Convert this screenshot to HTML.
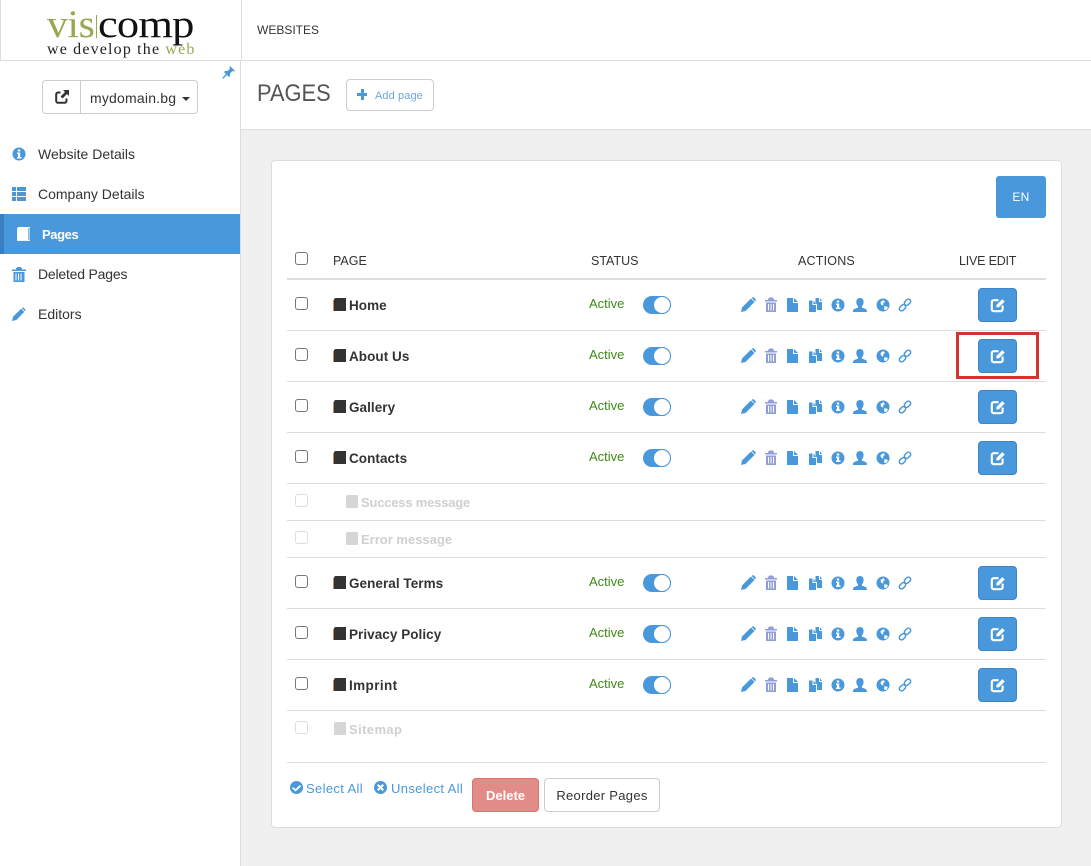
<!DOCTYPE html>
<html lang="en"><head><meta charset="utf-8"><title>Pages</title>
<style>
html,body{margin:0;padding:0;width:1091px;height:866px;overflow:hidden;background:#f0f0f0}
body{position:relative;font-family:"Liberation Sans",sans-serif;color:#333;font-size:13px}
div,span,svg{position:absolute;box-sizing:border-box}
.t{white-space:nowrap;line-height:18px}
.nav{left:38px;font-size:14px;color:#333}
.r{left:0;width:791px;height:50px}
.n{left:77px;top:17px;font-weight:bold;font-size:13.5px;letter-spacing:.05px;color:#333}
.cb{left:23px;top:17px;width:13px;height:13px;border:1px solid #767676;border-radius:3px;background:#fff}
.bk{left:61px;top:18px;width:14px;height:14px}
.ac{left:317px;top:15px;font-size:13px;color:#3c8a16}
.sw{left:371px;top:16px;width:28px;height:18px;border-radius:9px;background:#4a98dc}
.sw:after{content:"";position:absolute;right:0;top:0;width:18px;height:18px;border-radius:50%;background:#fff;border:1px solid #4a98dc;box-sizing:border-box}
.acts{left:469px;top:17px;width:171px;height:16px}
.le{left:706px;top:8px;width:39px;height:34px;background:#4a98dc;border:1px solid #3d86c6;border-radius:4px}
.le svg{left:11px;top:8px;width:16px;height:16px}
.d .cb{border-color:#ddd;top:10px}
.d .n{color:#d0d0d0;top:10px;font-size:13px;letter-spacing:0}
.d .bk{top:11px}
.line{left:15px;width:759px;height:1px;background:#ddd}
.th{top:252px;font-size:12.5px;color:#333}
</style></head>
<body>
<svg width="0" height="0" style="left:0;top:0">
<defs>
<symbol id="book" viewBox="0 0 14 14"><path d="M3 0H13V13H1V2Q1 0 3 0Z" fill="#333"/><path d="M0 2h1v11H0z" fill="#c98a50"/></symbol>
<symbol id="bookg" viewBox="0 0 14 14"><path d="M3 0H13V13H1V2Q1 0 3 0Z" fill="#d6d6d6"/></symbol>
<symbol id="acts" viewBox="0 0 171 16">
<g fill="#4a98dc">
<path d="M0 15 1 10.500 10 1.500 13.500 5 4.500 14ZM11 .5Q12 0 13 .5L14.500 2Q15 3 14.500 4L14 4.500 10.700 1Z"/>
<path transform="translate(8 0)" fill="#8f9fd8" d="M28 3h-3V1.500h-1V.5h-4v1h-1V3h-3v1.500h12ZM17 5.500h10V15H17Zm2 1.500v6.500h1V7Zm2.500 0v6.500h1V7Zm2.500 0v6.500h1V7Z" fill-rule="evenodd"/>
<path d="M46 1h6v5h5V15H46ZM53 1l4 4h-4Z"/>
<path d="M74.500 1h3.500v4h3v8h-5V7.500l-1.500-1.500ZM79 1l2 3h-2ZM68 3.500h3.500V8H75V15H68ZM72.500 3.500 75 7h-2.500Z"/>
<path fill-rule="evenodd" d="M97 1.500a6.500 6.500 0 1 0 0 13 6.500 6.500 0 0 0 0-13ZM95.800 3.500h2.400v2h-2.400ZM95 6.500h3.200v4H99.500v1.500h-4.500v-1.500h1v-2.500h-1Z"/>
<path d="M119 1c2.500 0 3.600 1.800 3.600 4s-1 3.700-1.700 4.300v1.300c2 .8 5 1.200 5 3.400v1H112v-1c0-2.200 3-2.600 5-3.400V9.300c-.7-.6-1.700-2.100-1.700-4.300S116.500 1 119 1Z"/>
<path fill-rule="evenodd" d="M142 1.500a6.500 6.500 0 1 0 0 13 6.500 6.500 0 0 0 0-13Zm-2 3 2.500-1.500L144 5l-2 1.500 .5 2-2-.5-1-2ZM143.500 9l3.500 1-1.500 3-2.500-.5Z"/>
</g>
<g fill="none" stroke="#4a98dc" stroke-width="1.500">
<rect x="158" y="8.500" width="7" height="4.500" rx="2.200" transform="rotate(-45 161.500 10.750)"/>
<rect x="163" y="3" width="7" height="4.500" rx="2.200" transform="rotate(-45 166.500 5.250)"/>
</g>
</symbol>
<symbol id="edit" viewBox="0 0 15 15">
<path d="M8 3H3.500A1.800 1.800 0 0 0 1.700 4.800V11.500A1.800 1.800 0 0 0 3.500 13.300H10A1.800 1.800 0 0 0 11.800 11.500V8" fill="none" stroke="currentColor" stroke-width="2"/>
<path d="M6 9.700V7.500L11.500 2 13.800 4.200 8.300 9.700Z" fill="currentColor"/>
</symbol>
</defs>
</svg>

<!-- sidebar and header -->
<div style="left:0;top:0;width:1091px;height:61px;background:#fff;border-bottom:1px solid #ddd"></div>
<div style="left:0;top:0;width:1px;height:60px;background:#ddd"></div>
<div style="left:241px;top:0;width:1px;height:60px;background:#ddd"></div>
<div style="left:0;top:61px;width:241px;height:805px;background:#fff;border-right:1px solid #ddd"></div>
<div style="left:241px;top:61px;width:850px;height:69px;background:#fff;border-bottom:1px solid #ddd"></div>

<!-- logo -->
<div class="t" style="left:47px;top:4px;font-family:'Liberation Serif',serif;font-size:39px;line-height:42px;color:#9aa651;letter-spacing:-.4px;transform:scaleX(1.07);transform-origin:left">vis</div>
<div style="left:96px;top:15px;width:1px;height:23px;background:#9aa651"></div>
<div class="t" style="left:98px;top:4px;font-family:'Liberation Serif',serif;font-size:39px;line-height:42px;color:#111;letter-spacing:-.7px;transform:scaleX(1.14);transform-origin:left">comp</div>
<div class="t" style="left:47px;top:41px;font-family:'Liberation Serif',serif;font-size:16px;color:#222;letter-spacing:1.17px">we develop the <span style="position:static;color:#9aa651">web</span></div>

<div class="t" style="left:257px;top:21px;font-size:12px;color:#333">WEBSITES</div>

<!-- pin -->
<svg style="left:222px;top:66px;width:13px;height:13px" viewBox="0 0 13 13"><path d="M8 0 13 5 11.800 5.500 10.500 5 8 7.500 8 10 7 11 2 6 3 5 5.500 5 8 2.500 7.500 1.200Z" fill="#4a98dc"/><path d="M5 8 .8 12.200" stroke="#4a98dc" stroke-width="1.400" fill="none"/></svg>

<!-- domain group -->
<div style="left:42px;top:80px;width:156px;height:34px;border:1px solid #ccc;border-radius:4px;background:#fff"></div>
<div style="left:80px;top:80px;width:1px;height:34px;background:#ccc"></div>
<svg style="left:55px;top:90px;width:14px;height:14px" viewBox="0 0 14 14"><path d="M5.500 2.500H3A1.800 1.800 0 0 0 1.200 4.300V11A1.800 1.800 0 0 0 3 12.800H9.700A1.800 1.800 0 0 0 11.500 11V8.500" fill="none" stroke="#333" stroke-width="2"/><path d="M8 0H14V6L12 4 7.500 8.500 5.500 6.500 10 2Z" fill="#333"/></svg>
<div class="t" style="left:90px;top:89px;font-size:14px;letter-spacing:.2px;color:#333">mydomain.bg</div>
<div style="left:182px;top:97px;width:0;height:0;border-top:4px solid #333;border-left:4px solid transparent;border-right:4px solid transparent"></div>

<!-- nav -->
<svg style="left:12px;top:147px;width:14px;height:14px" viewBox="0 0 14 14"><path fill="#4a98dc" fill-rule="evenodd" d="M7 .5a6.500 6.500 0 1 0 0 13 6.500 6.500 0 0 0 0-13ZM5.800 2.500h2.400v2H5.800ZM5 5.500h3.200v4.500H9.500v1.500H5V10h1V7H5Z"/></svg>
<div class="t nav" style="top:145px">Website Details</div>
<svg style="left:12px;top:187px;width:14px;height:14px" viewBox="0 0 14 14"><path fill="#4a98dc" d="M0 0h4v4H0ZM5 0H14V4H5ZM0 5h4v4H0ZM5 5H14V9H5ZM0 10h4v4H0ZM5 10H14V14H5Z"/></svg>
<div class="t nav" style="top:185px">Company Details</div>
<div style="left:0;top:214px;width:240px;height:40px;background:#4a98dc;border-left:4px solid #3a7fbf"></div>
<svg style="left:16px;top:227px;width:15px;height:15px" viewBox="0 0 14 14"><path d="M3 0H13V13H1V2Q1 0 3 0Z" fill="#fff"/><path d="M11.500 1h1v11h-1z" fill="#4a98dc"/></svg>
<div class="t nav" style="left:42px;top:226px;color:#fff;font-weight:bold;font-size:13px;letter-spacing:-.4px">Pages</div>
<svg style="left:12px;top:266px;width:14px;height:16px" viewBox="0 0 14 16"><path fill="#4a98dc" fill-rule="evenodd" d="M14 3.500h-4V2H9V1H5v1H4v1.500H0V5h14ZM1.500 6h11v10h-11Zm2 1.500v7h1v-7Zm2.500 0v7h1v-7Zm2.500 0v7h1v-7Z"/></svg>
<div class="t nav" style="top:265px;letter-spacing:-.2px">Deleted Pages</div>
<svg style="left:12px;top:307px;width:14px;height:14px" viewBox="0 0 16 16"><path fill="#4a98dc" d="M0 16 1.200 11 10.500 2 14 5.500 5 14.800ZM11.500 1Q12.500 0 13.500 1L15 2.500Q16 3.500 15 4.500L14.700 4.800 11.200 1.300Z"/></svg>
<div class="t nav" style="top:305px">Editors</div>

<!-- title bar -->
<div class="t" style="left:257px;top:78px;font-size:24px;line-height:32px;color:#555;transform:scaleX(.91);transform-origin:left">PAGES</div>
<div style="left:346px;top:79px;width:88px;height:32px;border:1px solid #ccc;border-radius:4px;background:#fff"></div>
<div style="left:357px;top:93px;width:10px;height:2.500px;background:#4a98dc"></div>
<div style="left:361px;top:89px;width:2.500px;height:11px;background:#4a98dc"></div>
<div class="t" style="left:375px;top:87px;font-size:11px;letter-spacing:.1px;color:#6fa5dd">Add page</div>

<!-- panel -->
<div style="left:271px;top:160px;width:791px;height:668px;background:#fff;border:1px solid #ddd;border-radius:4px"></div>
<div class="t" style="left:996px;top:176px;width:50px;height:42px;background:#4a98dc;border-radius:3px;color:#fff;font-size:12px;line-height:42px;text-align:center;letter-spacing:.3px">EN</div>

<!-- table header -->
<div style="left:295px;top:252px;width:13px;height:13px;border:1px solid #767676;border-radius:3px;background:#fff"></div>
<div class="t th" style="left:333px">PAGE</div>
<div class="t th" style="left:591px">STATUS</div>
<div class="t th" style="left:798px;letter-spacing:.2px">ACTIONS</div>
<div class="t th" style="left:959px;letter-spacing:-.2px">LIVE EDIT</div>
<div style="left:287px;top:278px;width:759px;height:2px;background:#ddd"></div>

<!-- rows -->
<div class="r" style="left:272px;top:280px"><div class="cb"></div><svg class="bk"><use href="#book"/></svg><div class="t n">Home</div><div class="t ac">Active</div><div class="sw"></div><svg class="acts"><use href="#acts"/></svg><div class="le" style="color:#fff"><svg><use href="#edit"/></svg></div></div>
<div class="r" style="left:272px;top:331px"><div class="cb"></div><svg class="bk"><use href="#book"/></svg><div class="t n">About Us</div><div class="t ac">Active</div><div class="sw"></div><svg class="acts"><use href="#acts"/></svg><div class="le" style="color:#fff"><svg><use href="#edit"/></svg></div></div>
<div class="r" style="left:272px;top:382px"><div class="cb"></div><svg class="bk"><use href="#book"/></svg><div class="t n">Gallery</div><div class="t ac">Active</div><div class="sw"></div><svg class="acts"><use href="#acts"/></svg><div class="le" style="color:#fff"><svg><use href="#edit"/></svg></div></div>
<div class="r" style="left:272px;top:433px"><div class="cb"></div><svg class="bk"><use href="#book"/></svg><div class="t n">Contacts</div><div class="t ac">Active</div><div class="sw"></div><svg class="acts"><use href="#acts"/></svg><div class="le" style="color:#fff"><svg><use href="#edit"/></svg></div></div>
<div class="r d" style="left:272px;top:484px"><div class="cb"></div><svg class="bk" style="left:73px"><use href="#bookg"/></svg><div class="t n" style="left:89px;letter-spacing:-.2px">Success message</div></div>
<div class="r d" style="left:272px;top:521px"><div class="cb"></div><svg class="bk" style="left:73px"><use href="#bookg"/></svg><div class="t n" style="left:89px">Error message</div></div>
<div class="r" style="left:272px;top:558px"><div class="cb"></div><svg class="bk"><use href="#book"/></svg><div class="t n">General Terms</div><div class="t ac">Active</div><div class="sw"></div><svg class="acts"><use href="#acts"/></svg><div class="le" style="color:#fff"><svg><use href="#edit"/></svg></div></div>
<div class="r" style="left:272px;top:609px"><div class="cb"></div><svg class="bk"><use href="#book"/></svg><div class="t n">Privacy Policy</div><div class="t ac">Active</div><div class="sw"></div><svg class="acts"><use href="#acts"/></svg><div class="le" style="color:#fff"><svg><use href="#edit"/></svg></div></div>
<div class="r" style="left:272px;top:660px"><div class="cb"></div><svg class="bk"><use href="#book"/></svg><div class="t n" style="letter-spacing:.4px">Imprint</div><div class="t ac">Active</div><div class="sw"></div><svg class="acts"><use href="#acts"/></svg><div class="le" style="color:#fff"><svg><use href="#edit"/></svg></div></div>
<div class="r d" style="left:272px;top:711px"><div class="cb"></div><svg class="bk"><use href="#bookg"/></svg><div class="t n" style="letter-spacing:.4px">Sitemap</div></div>

<!-- row lines -->
<div class="line" style="left:287px;top:330px"></div>
<div class="line" style="left:287px;top:381px"></div>
<div class="line" style="left:287px;top:432px"></div>
<div class="line" style="left:287px;top:483px"></div>
<div class="line" style="left:287px;top:520px"></div>
<div class="line" style="left:287px;top:557px"></div>
<div class="line" style="left:287px;top:608px"></div>
<div class="line" style="left:287px;top:659px"></div>
<div class="line" style="left:287px;top:710px"></div>
<div class="line" style="left:287px;top:762px"></div>

<!-- highlight -->
<div style="left:956px;top:332px;width:83px;height:47px;border:3px solid #d0362b"></div>

<!-- footer -->
<svg style="left:290px;top:781px;width:13px;height:13px" viewBox="0 0 13 13"><path fill="#4a98dc" fill-rule="evenodd" d="M6.500 0a6.500 6.500 0 1 0 0 13 6.500 6.500 0 0 0 0-13ZM3 6 5.500 8 10 4 11 5.500 5.500 10.500 2 7.300Z"/></svg>
<div class="t" style="left:306px;top:780px;font-size:13px;letter-spacing:.35px;color:#4a98dc">Select All</div>
<svg style="left:374px;top:781px;width:13px;height:13px" viewBox="0 0 13 13"><path fill="#4a98dc" fill-rule="evenodd" d="M6.500 0a6.500 6.500 0 1 0 0 13 6.500 6.500 0 0 0 0-13ZM4.500 3 6.500 5 8.500 3 10 4.500 8 6.500 10 8.500 8.500 10 6.500 8 4.500 10 3 8.500 5 6.500 3 4.500Z"/></svg>
<div class="t" style="left:391px;top:780px;font-size:13px;letter-spacing:.35px;color:#4a98dc">Unselect All</div>
<div class="t" style="left:472px;top:778px;width:67px;height:34px;background:#e28c87;border:1px solid #d9746e;border-radius:4px;color:#fff;font-weight:bold;font-size:13px;line-height:33px;text-align:center">Delete</div>
<div class="t" style="left:544px;top:778px;width:116px;height:34px;background:#fff;border:1px solid #ccc;border-radius:4px;color:#333;font-size:13px;line-height:33px;text-align:center;letter-spacing:.3px">Reorder Pages</div>
</body></html>
